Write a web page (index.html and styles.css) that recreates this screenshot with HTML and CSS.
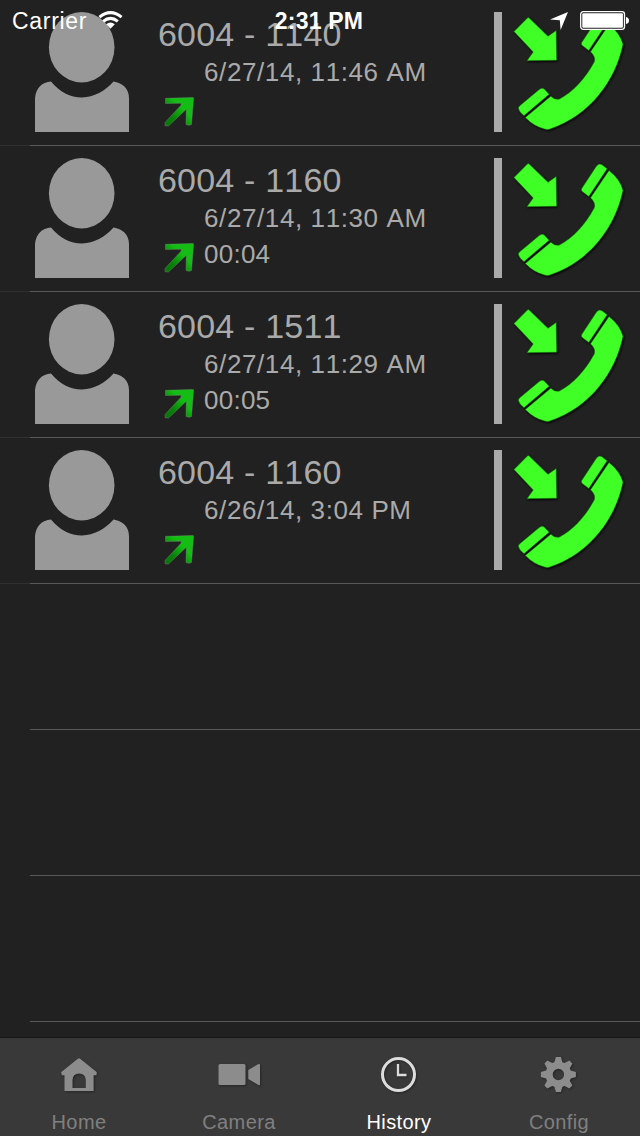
FILE: index.html
```html
<!DOCTYPE html>
<html lang="en">
<head>
<meta charset="utf-8">
<title>History</title>
<link rel="stylesheet" href="styles.css">
</head>
<body>
<svg class="defs" width="0" height="0" aria-hidden="true">
  <defs>
    <linearGradient id="arrowFill" gradientUnits="userSpaceOnUse" x1="2" y1="29" x2="19" y2="12">
      <stop offset="0" stop-color="#087408"/><stop offset=".45" stop-color="#078107"/><stop offset="1" stop-color="#13bd13"/>
    </linearGradient>
    <symbol id="person" viewBox="35 12 94 120">
      <ellipse cx="81.7" cy="47.2" rx="32.8" ry="35.2"/>
      <path d="M35 132V98C36 88 42 82 51 81.5C60 92 70 97.4 82 97.4S105 91 113.500 81.500C122 83 129 88 129 98V132Z"/>
    </symbol>
    <symbol id="outgoing" viewBox="0 0 30 30">
      <path d="M1.500 1.300L28.900.5Q29.600.5 29.600 1.300L27.500 27.500L25 28.300L22 27.500L22.300 12.300L4.500 29L1 28.800V25.500L17 8.200L17.300 6.200L1.500 6.500Z" fill="url(#arrowFill)" stroke="#789078" stroke-width=".4"/>
    </symbol>
    <symbol id="call" viewBox="510 12 120 122">
      <g stroke-width=".5" stroke-linejoin="round">
        <path d="M514 31.600L527.400 18Q528.300 17.200 529.200 18L548 36.300L556.200 30.500L556.700 60.300L527 60.700L533.200 52Z"/>
        <path d="M581.700 42.500L596.500 20Q599 17 602 18.700L607.200 22.800L588.800 50.500L582.500 45.800Q580.600 44.300 581.700 42.500Z"/>
        <path d="M609 24.500Q620 33 623 44.300C616 80 590 116 550 129Q548 130.200 544.500 129Q534 126.500 525.300 117.500L550.800 96.200Q554.500 99.800 559 99.200C573 92 585 79 594.200 62Q596 57 590.500 51.800Z"/>
        <path d="M519.500 106L539.500 89.300Q542.500 87.300 544.500 89.200L549.200 94.300L524 115.700Q519 112 518.500 108.500Q518.200 107 519.500 106Z"/>
      </g>
    </symbol>
  </defs>
</svg>
<div class="screen">
  <header class="status">
    <div class="status-left">
      <span>Carrier</span>
      <svg class="wifi" viewBox="0 0 26 18">
        <g fill="none" stroke="#fff" stroke-width="3.200">
          <path d="M1.500 6Q13-3.200 24.500 6M5.400 10.400Q13 4.300 20.600 10.400"/>
        </g>
        <path d="M8.500 13.300Q13 10 17.500 13.300L13 18Z" fill="#fff"/>
      </svg>
    </div>
    <span class="clock">2:31 PM</span>
    <div class="status-right">
      <svg class="location" viewBox="0 0 18 18"><path d="M18 0L10.600 18L9.800 8.200L0 7.500Z" fill="#fff"/></svg>
      <svg class="battery" viewBox="0 0 50 20">
        <rect x=".7" y=".7" width="43.800" height="17.600" rx="2.500" fill="#202020" stroke="#fff" stroke-width="1.300"/>
        <rect x="2.300" y="2.300" width="40.600" height="14.400" rx="1" fill="#fff"/>
        <path d="M46 6Q49 6.500 49 9.500T46 13Z" fill="#fff"/>
      </svg>
    </div>
  </header>
  <main class="list">
    <article class="row">
      <svg class="avatar"><use href="#person"/></svg>
      <div class="info">
        <div class="number">6004 - 1140</div>
        <div class="date">6/27/14, 11:46 AM</div>
        <div class="meta"><svg class="direction"><use href="#outgoing"/></svg></div>
      </div>
      <div class="bar"></div>
      <svg class="call"><use href="#call"/></svg>
    </article>
    <article class="row">
      <svg class="avatar"><use href="#person"/></svg>
      <div class="info">
        <div class="number">6004 - 1160</div>
        <div class="date">6/27/14, 11:30 AM</div>
        <div class="meta"><svg class="direction"><use href="#outgoing"/></svg><span>00:04</span></div>
      </div>
      <div class="bar"></div>
      <svg class="call"><use href="#call"/></svg>
    </article>
    <article class="row">
      <svg class="avatar"><use href="#person"/></svg>
      <div class="info">
        <div class="number">6004 - 1511</div>
        <div class="date">6/27/14, 11:29 AM</div>
        <div class="meta"><svg class="direction"><use href="#outgoing"/></svg><span>00:05</span></div>
      </div>
      <div class="bar"></div>
      <svg class="call"><use href="#call"/></svg>
    </article>
    <article class="row">
      <svg class="avatar"><use href="#person"/></svg>
      <div class="info">
        <div class="number">6004 - 1160</div>
        <div class="date">6/26/14, 3:04 PM</div>
        <div class="meta"><svg class="direction"><use href="#outgoing"/></svg></div>
      </div>
      <div class="bar"></div>
      <svg class="call"><use href="#call"/></svg>
    </article>
    <div class="row empty"></div>
    <div class="row empty"></div>
    <div class="row empty"></div>
  </main>
  <nav class="tabs">
    <a class="tab">
      <svg class="tab-icon" viewBox="0 0 44 38"><path fill-rule="evenodd" d="M20.500 3Q22 1.500 23.500 3L39 15.500Q40.500 16.800 39.500 18V19.300H36.600V35H7.500V19.300H4.700V18Q3.500 16.500 5 15.500ZM15.500 32H28.800V24Q28.500 17.500 22.100 17.500T15.500 24Z"/></svg>
      <span>Home</span>
    </a>
    <a class="tab">
      <svg class="tab-icon" viewBox="0 0 44 38"><rect x="1.500" y="8" width="27" height="21" rx="1.500"/><path d="M31.300 14L41 8.300Q43 7.200 43 9V28Q43 30 41 28.700L31.300 23Z"/></svg>
      <span>Camera</span>
    </a>
    <a class="tab active">
      <svg class="tab-icon" viewBox="0 0 44 38"><circle cx="21.500" cy="18.600" r="16" fill="none" stroke="#ddd" stroke-width="3"/><path d="M21 8V19H29.500" fill="none" stroke="#ddd" stroke-width="2.300"/></svg>
      <span>History</span>
    </a>
    <a class="tab">
      <svg class="tab-icon" viewBox="0 0 44 38">
        <g transform="translate(21.400 18.500)">
          <path fill-rule="evenodd" d="M-2.500-17.500H2.500L4-12.300L6.200-11.400L11-14L14-11L11.400-6.200L12.300-4L17.500-2.500V2.500L12.300 4L11.400 6.200L14 11L11 14L6.200 11.400L4 12.300L2.500 17.500H-2.500L-4 12.300L-6.200 11.400L-11 14L-14 11L-11.400 6.200L-12.300 4L-17.500 2.500V-2.500L-12.300-4L-11.400-6.200L-14-11L-11-14L-6.200-11.400L-4-12.300ZM5.700 0A5.700 5.700 0 1 0-5.700 0A5.700 5.700 0 1 0 5.700 0Z"/>
        </g>
      </svg>
      <span>Config</span>
    </a>
  </nav>
</div>
</body>
</html>
```

FILE: styles.css
```css
* { box-sizing: border-box; }
body {
  margin: 0;
  background: #212121;
  font-family: "Liberation Sans", Arial, sans-serif;
  font-kerning: none;
}
svg { display: block; flex: none; }
.defs { position: absolute; }
.screen {
  position: relative;
  width: 640px;
  height: 1136px;
  display: flex;
  flex-direction: column;
  overflow: hidden;
}

/* Translucent status bar floating over the list */
.status {
  position: absolute;
  inset: 1px 0 auto 0;
  z-index: 2;
  height: 40px;
  padding: 0 10px 0 12px;
  display: grid;
  grid-template-columns: 1fr auto 1fr;
  align-items: center;
  color: #fff;
  font-size: 23px;
  line-height: 40px;
}
.status-left, .status-right { display: flex; align-items: center; }
.status-left { gap: 11px; letter-spacing: .7px; }
.status-right { justify-content: flex-end; gap: 12px; }
.wifi { width: 25px; height: 18px; margin-top: -2px; }
.clock { font-weight: 700; font-size: 23px; letter-spacing: .2px; margin-right: 4px; }
.location { width: 18px; height: 18px; }
.battery { width: 50px; height: 20px; }

.list { flex: 1; min-height: 0; }
.row {
  height: 146px;
  padding: 12px 10px 13px 35px;
  display: flex;
  background:
    linear-gradient(#585858, #585858) 30px 145px / 610px 1px no-repeat,
    linear-gradient(#303030, #303030) 0 145px / 30px 1px no-repeat;
}
.row.empty { background: linear-gradient(#585858, #585858) 30px 145px / 610px 1px no-repeat; }
.avatar { width: 94px; height: 120px; fill: #999; }
.info {
  width: 338px;
  margin-left: 27px;
  color: #aaa;
  white-space: nowrap;
}
.number {
  height: 42px;
  padding-left: 2px;
  font-size: 34px;
  line-height: 44px;
  letter-spacing: .2px;
}
.date {
  height: 36px;
  padding-left: 48px;
  font-size: 26px;
  line-height: 36px;
  letter-spacing: .6px;
}
.meta {
  height: 36px;
  padding-left: 8px;
  display: flex;
  gap: 10px;
  font-size: 26px;
  line-height: 36px;
  letter-spacing: .25px;
}
.direction { width: 30px; height: 30px; margin-top: 7px; }
.bar { width: 8px; height: 120px; background: #aaa; }
.call {
  width: 120px;
  height: 122px;
  margin-left: 8px;
  fill: #3fff26;
  stroke: #126b0b;
  filter: drop-shadow(1px 1px 1px #000);
}

.tabs {
  height: 99px;
  padding-top: 18px;
  border-top: 1px solid #171717;
  display: grid;
  grid-template-columns: repeat(4, 160px);
  background: #393939;
}
.tab {
  display: flex;
  flex-direction: column;
  align-items: center;
  gap: 13px;
  padding-right: 2px;
  color: #808080;
  font-size: 20px;
  line-height: 30px;
  letter-spacing: .4px;
}
.tab.active { color: #fff; }
.tab-icon {
  width: 44px;
  height: 38px;
  fill: #8c8c8c;
  filter: drop-shadow(1px 1px 1px #252525);
}
```
